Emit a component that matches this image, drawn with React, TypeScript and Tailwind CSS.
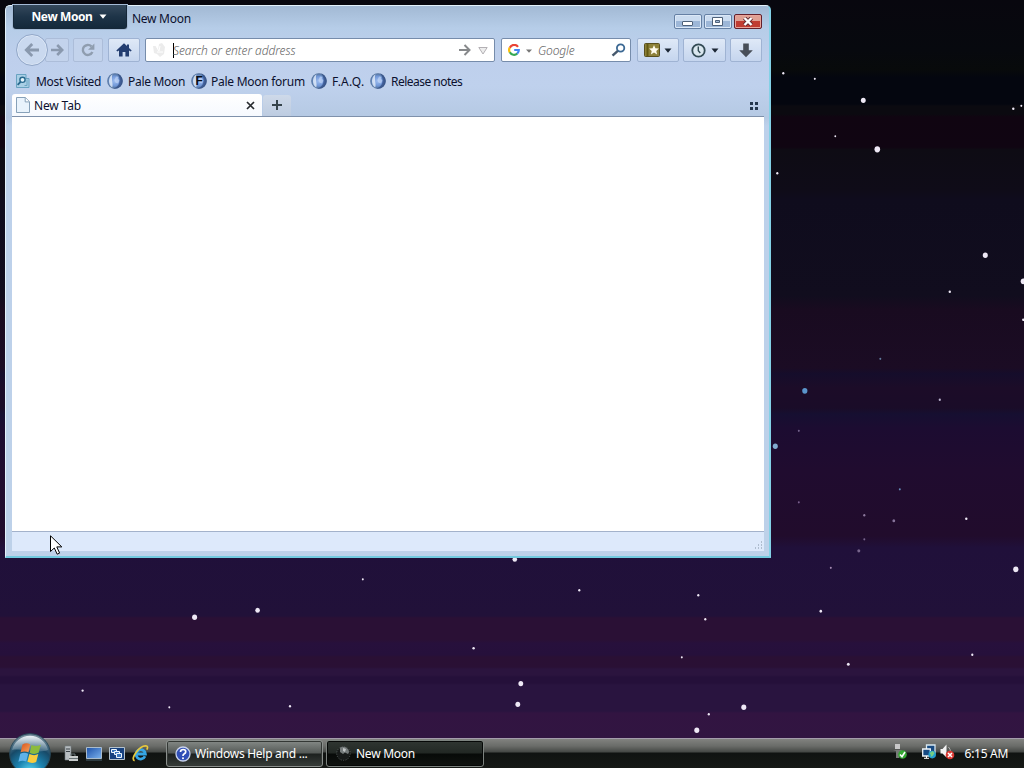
import React from 'react';

type Star = [number, number, number, string?];

const STARS: Star[] = [
  [783, 73, 1.1], [814.5, 78.5, 1], [863, 100, 2.4], [877, 149, 2.8], [835, 136, 0.9],
  [777, 173, 1.1], [1013, 108.5, 1.2], [1021, 105.5, 1], [985, 255, 2.5], [949.5, 291.5, 1.2],
  [1023, 281, 2.6], [1023, 319.5, 1.2], [880, 358.5, 1, '#627b9d'], [804.5, 390.5, 2.6, '#5b95cb'],
  [939.5, 399.5, 1.1, '#b9b1cc'], [798.5, 430.5, 1, '#74638c'], [775, 446, 2.5, '#82acd0'],
  [899.5, 489, 1, '#668bb7'], [798.5, 502, 1, '#79608d'], [864, 515, 1.1, '#8c799d'],
  [893.5, 520.5, 1.4, '#86749b'], [966, 518.5, 1.2], [864, 539, 1, '#78658d'],
  [858.5, 550.5, 1.5, '#77658c'], [830.5, 567.5, 1, '#a58bb2'], [1015.5, 569, 2.6],
  [820.5, 611, 1.3], [705, 619, 1.1], [698, 595, 1.1], [681.5, 657, 1],
  [848, 664, 1.4], [972, 654.5, 1.1], [743.5, 707, 2.5], [708.5, 714, 1.1], [696.5, 730, 2.5],
  [514.5, 559, 2.3], [579, 590, 1.1], [362.5, 579, 1], [194.3, 617, 2.5], [257.3, 610, 2.3],
  [473.3, 648, 1.2], [520.5, 683.3, 2.4], [517.5, 704, 2.4], [289.7, 706, 1.1], [169, 707, 1],
  [82.3, 690.3, 1.1],
];

const BOOKMARKS = [
  { label: 'Most Visited', kind: 'folder', className: 'w-[92px] gap-[5px] tracking-[-0.32px]' },
  { label: 'Pale Moon', kind: 'moon', className: 'w-[84px] gap-[5px] tracking-[-0.3px]' },
  { label: 'Pale Moon forum', kind: 'forum', className: 'w-[120px] gap-1 tracking-[-0.27px]' },
  { label: 'F.A.Q.', kind: 'moon', className: 'w-[59px] gap-[5px] tracking-[0.2px]' },
  { label: 'Release notes', kind: 'moon', className: 'w-[100px] gap-[5px] tracking-[-0.52px]' },
];

const Caret: React.FC = () => (
  <svg width="8" height="5" viewBox="0 0 8 5" fill="currentColor">
    <path d="M.5.5h7L4 4.7z" />
  </svg>
);

const BookmarkIcon: React.FC<{ kind: string }> = ({ kind }) => {
  if (kind === 'folder') {
    return (
      <svg width="16" height="16" viewBox="0 0 16 16" className="-mt-px shrink-0">
        <path d="M1.5 1.5h9.5v4h3v9H1.5z" fill="#a9cfe5" stroke="#69a3c1" />
        <circle cx="7.5" cy="6.8" r="2.6" fill="#e4f4fb" stroke="#28698e" strokeWidth="1.4" />
        <path d="M5.6 8.8l-3 3" stroke="#28698e" strokeWidth="1.8" />
        <path d="M9.5 12.5h2.5v-6" stroke="#6ba5c3" fill="none" />
      </svg>
    );
  }
  return (
    <svg width="16" height="16" viewBox="0 0 16 16" className="-mt-px shrink-0">
      <circle cx="8" cy="8" r="7.8" fill="url(#moonBall)" />
      <path d="M5.5 1.2C1 4 .8 11.5 5.2 14.6 6.6 11 3.8 6 5.5 1.2z" fill="#eef4fc" opacity=".75" />
      <path d="M9 3.4l2.4.4-.6 2 1.8 1.8-1.6 2.8-2.4-.6L7.4 7z" fill="#d9e8ff" opacity=".5" />
      <path d="M10.5.6A7.8 7.8 0 0 1 6 15.5C11.5 15 15 8 10.5.6z" fill="#233c78" opacity=".55" />
      {kind === 'forum' && (
        <text x="4.4" y="12.3" fontSize="12" fontWeight="900" fontFamily="Liberation Sans" fill="#050b14">F</text>
      )}
    </svg>
  );
};

const Defs: React.FC = () => (
  <svg width="0" height="0" className="absolute">
    <defs>
      <radialGradient id="moonBall" cx=".48" cy=".5" r=".55">
        <stop offset="0" stopColor="#9fbef0" />
        <stop offset=".55" stopColor="#7298d8" />
        <stop offset=".85" stopColor="#55759f" />
        <stop offset="1" stopColor="#344f86" />
      </radialGradient>
      <radialGradient id="orb" cx=".5" cy=".95" r=".9">
        <stop offset="0" stopColor="#5fdcf4" />
        <stop offset=".35" stopColor="#1c85b2" />
        <stop offset=".7" stopColor="#174a68" />
        <stop offset="1" stopColor="#6f8796" />
      </radialGradient>
      <linearGradient id="orbGloss" x1="0" y1="0" x2="0" y2="1">
        <stop offset="0" stopColor="#f4f8fb" stopOpacity=".95" />
        <stop offset="1" stopColor="#b6cbd6" stopOpacity=".25" />
      </linearGradient>
      <linearGradient id="flagRed" x1="0" y1="0" x2="1" y2="1">
        <stop offset="0" stopColor="#d8541c" />
        <stop offset="1" stopColor="#f7a25a" />
      </linearGradient>
      <linearGradient id="screen" x1="0" y1="0" x2="1" y2="1">
        <stop offset="0" stopColor="#1c50a8" />
        <stop offset="1" stopColor="#7cb3ee" />
      </linearGradient>
    </defs>
  </svg>
);

const Sky: React.FC = () => (
  <svg width="1024" height="768" className="absolute inset-0">
    {STARS.map(([x, y, r, color], i) => (
      <ellipse key={i} cx={x + 0.3} cy={y + 0.3} rx={r} ry={r * 1.1} fill={color ?? '#eee8f5'} />
    ))}
  </svg>
);

const TitleBar: React.FC = () => (
  <div className="flex h-[31px] items-start pl-[1px] pr-[2px]">
    <div className="flex h-6 w-[114px] items-center justify-center gap-[6px] rounded-b-[3px] border border-t-0 border-[#152738] bg-linear-to-b from-[#35495c] via-[#1e3448] to-[#14293b] pr-[2px] text-[12px] font-bold text-white shadow-[0_0_0_1px_#a4bad5]">
      <span className="tracking-[-0.4px]">New Moon</span>
      <Caret />
    </div>
    <span className="ml-[5px] mt-[4px] text-[12px] leading-5 tracking-[-0.27px]">New Moon</span>
    <div className="ml-auto mt-[9px] flex gap-[2px]">
      <div className="flex h-[15px] w-7 items-center justify-center rounded-[2px] border border-[#6580a4] bg-linear-to-b from-[#cbdcf0] from-50% to-[#9db7d8] to-50% shadow-[inset_0_0_0_1px_#dbe8f7]">
        <div className="ml-[-1px] mt-1 h-[5px] w-[11px] rounded-[1px] border border-[#4e6179] bg-white" />
      </div>
      <div className="flex h-[15px] w-7 items-center justify-center rounded-[2px] border border-[#6580a4] bg-linear-to-b from-[#cbdcf0] from-50% to-[#9db7d8] to-50% shadow-[inset_0_0_0_1px_#dbe8f7]">
        <svg width="11" height="9" viewBox="0 0 11 9" className="-ml-px">
          <path d="M.5.5h10v8H.5z" fill="#fff" stroke="#4e6179" />
          <path d="M3.5 3.5h4v2h-4z" fill="#a5bbd6" stroke="#4e6179" />
        </svg>
      </div>
      <div className="flex h-[15px] w-7 items-center justify-center rounded-[2px] border border-[#64202b] bg-linear-to-b from-[#e0a093] from-45% to-[#c03c32] to-50% shadow-[inset_0_0_0_1px_#e9a49a]">
        <svg width="12" height="9" viewBox="0 0 12 9">
          <path d="M2.5 1l7 7m0-7l-7 7" stroke="#642e36" strokeWidth="4.2" />
          <path d="M2.5 1l7 7m0-7l-7 7" stroke="#fff" strokeWidth="2.4" />
        </svg>
      </div>
    </div>
  </div>
);

const toolButton =
  'flex h-6 items-center justify-center rounded-[2px] border border-[#9fb3d3] bg-linear-to-b from-[#dfe9f7] to-[#c5d5ee] text-[#1c2735]';
const dimButton =
  'flex h-6 items-center justify-center rounded-[2px] border border-[#acbdd9] bg-[#c3d3ec]';

const NavBar: React.FC = () => (
  <div className="flex h-[31px] items-start pl-1 pr-[2px] pt-[2px]">
    <div className="z-10 -mt-1 flex size-8 shrink-0 items-center justify-center rounded-full border border-[#92a7c8] bg-[#cad9ef] shadow-[inset_0_0_0_1px_#dce7f6]">
      <svg width="16" height="14" viewBox="0 0 16 14" fill="none" stroke="#8a99ae" strokeWidth="2.8">
        <path d="M8.2 1L2.3 7l5.9 6M2.5 7H15" />
      </svg>
    </div>
    <div className={`${dimButton} -ml-[3px] w-6 shrink-0`}>
      <svg width="13" height="12" viewBox="0 0 13 12" fill="none" stroke="#8a99ae" strokeWidth="2.6">
        <path d="M6.2 1l5 5-5 5M11 6H0" />
      </svg>
    </div>
    <div className={`${dimButton} ml-1 w-[30px] shrink-0`}>
      <svg width="14" height="14" viewBox="0 0 14 14" fill="none">
        <path d="M10.4 3.4A5 5 0 1 0 11.4 9" stroke="#8f9daf" strokeWidth="2.4" />
        <path d="M13.4.5v6.3H7z" fill="#8f9daf" />
      </svg>
    </div>
    <div className={`${toolButton} ml-[5px] w-8 shrink-0`}>
      <svg width="16" height="14" viewBox="0 0 16 14" fill="#233d70">
        <path d="M8 .3L.3 7.6l1 1L3 7.5V13.5h3.6V9h2.8v4.5H13V7.5l1.7 1.1 1-1L13 5V1.5h-2V3z" />
      </svg>
    </div>
    <div className="ml-[5px] flex h-6 w-[350px] shrink-0 items-center rounded-[2px] border border-[#768cab] bg-white pl-[6px] pr-[6px]">
      <svg width="14" height="14" viewBox="0 0 14 14" fill="#ececec">
        <path d="M1 3h3l2 4 1-6 3-1 3 4-1 7-4 3-3-3-3-1z" />
        <path d="M4 3l3 5 1-5m-3 6h6" stroke="#fff" fill="none" />
      </svg>
      <div className="ml-[7px] h-[15px] w-px bg-black" />
      <span className="-ml-px mt-[2px] text-[12px] font-light italic tracking-[-0.07px] text-[#666]">Search or enter address</span>
      <svg width="12" height="12" viewBox="0 0 12 12" className="ml-auto" fill="none" stroke="#87898b" strokeWidth="2">
        <path d="M5.5 1l5 5-5 5M10.5 6H0" />
      </svg>
      <svg width="10" height="9" viewBox="0 0 10 9" className="ml-[7px]" fill="#ededed" stroke="#b3b0b4">
        <path d="M.8 1.5h8.4L5 8z" />
      </svg>
    </div>
    <div className="ml-[6px] flex h-6 w-[130px] shrink-0 items-center rounded-[2px] border border-[#768cab] bg-white pl-[6px] pr-[4px]">
      <svg width="12" height="12" viewBox="0 0 12 12" fill="none" strokeWidth="2.2">
        <path d="M10 2.8A4.8 4.8 0 0 0 1.8 3.7" stroke="#ea4335" />
        <path d="M1.8 3.6a4.8 4.8 0 0 0 0 4.8" stroke="#fbbc05" />
        <path d="M1.8 8.3a4.8 4.8 0 0 0 7.5 1.2" stroke="#34a853" />
        <path d="M9.2 9.6A4.8 4.8 0 0 0 10.8 6H6.2" stroke="#4285f4" />
      </svg>
      <svg width="6" height="4" viewBox="0 0 6 4" className="ml-[6px] mt-px" fill="#777">
        <path d="M0 .5h6L3 3.7z" />
      </svg>
      <span className="ml-[6px] mt-[2px] text-[12px] font-light italic tracking-[-0.15px] text-[#666]">Google</span>
      <svg width="15" height="14" viewBox="0 0 15 14" className="ml-auto" fill="none">
        <circle cx="9.6" cy="5" r="3.7" stroke="#3b6893" strokeWidth="1.8" />
        <path d="M6.8 7.8L1.5 12.7" stroke="#46586c" strokeWidth="2.4" />
      </svg>
    </div>
    <div className={`${toolButton} ml-[6px] w-[42px] shrink-0 gap-1`}>
      <svg width="16" height="14" viewBox="0 0 16 14">
        <rect x=".5" y=".5" width="15" height="13" rx="1" fill="#8d8139" stroke="#595020" />
        <path d="M3.5 1v12" stroke="#635913" strokeWidth="2" />
        <path d="M10 2l1.4 3.2 3.5.4-2.6 2.3.8 3.5-3.1-1.8-3.1 1.8.8-3.5-2.6-2.3 3.5-.4z" fill="#fffbed" />
      </svg>
      <Caret />
    </div>
    <div className={`${toolButton} ml-1 w-[43px] shrink-0 gap-[5px]`}>
      <svg width="15" height="15" viewBox="0 0 15 15" fill="none" stroke="#334b55">
        <circle cx="7.5" cy="7.5" r="6.2" strokeWidth="1.8" fill="#dae7ef" />
        <path d="M7.3 3.5v4.3l2 2.2" strokeWidth="1.4" />
      </svg>
      <Caret />
    </div>
    <div className={`${toolButton} ml-1 w-8 shrink-0`}>
      <svg width="14" height="15" viewBox="0 0 14 15" fill="#474e58">
        <path d="M4.2.5h5.6v6.7h4L7 14.2.2 7.2h4z" />
      </svg>
    </div>
  </div>
);

const BookmarksBar: React.FC = () => (
  <div className="flex h-[27px] items-center pl-[3px] pt-[2px]">
    {BOOKMARKS.map(({ label, kind, className }) => (
      <div key={label} className={`flex shrink-0 items-center whitespace-nowrap text-[12px] ${className}`}>
        <BookmarkIcon kind={kind} />
        <span>{label}</span>
      </div>
    ))}
  </div>
);

const TabBar: React.FC = () => (
  <div className="flex h-[23px] items-end border-b border-[#7f91ab]">
    <div className="flex h-[22px] w-[250px] items-center rounded-t-[3px] bg-linear-to-b from-white to-[#f6f9fe] pl-1 pr-[7px]">
      <svg width="14" height="16" viewBox="0 0 14 16">
        <path d="M.5.5h8.8l4.2 4.2v10.8H.5z" fill="#e9f3fc" stroke="#87a1b9" />
        <path d="M9.2.7v4.2h4.2" fill="#fff" stroke="#87a1b9" />
      </svg>
      <span className="ml-1 mt-[2px] text-[12px] tracking-[-0.15px]">New Tab</span>
      <svg width="9" height="9" viewBox="0 0 9 9" className="ml-auto" stroke="#272a2e" strokeWidth="1.7">
        <path d="M1 1l7 7M8 1L1 8" />
      </svg>
    </div>
    <div className="ml-px flex h-[21px] w-7 items-center justify-center rounded-t-[3px] bg-linear-to-b from-[#ced9e9] to-[#bdcce1]">
      <svg width="10" height="10" viewBox="0 0 10 10" className="-mt-px" stroke="#35434b" strokeWidth="2">
        <path d="M5 0v10M0 5h10" />
      </svg>
    </div>
    <div className="mb-[6px] ml-auto mr-[6px] grid grid-cols-2 gap-[2px]">
      {[0, 1, 2, 3].map((n) => (
        <div key={n} className="size-[3px] bg-[#24374e]" />
      ))}
    </div>
  </div>
);

const BrowserWindow: React.FC = () => (
  <div className="absolute left-[5px] top-[5px] flex h-[553px] w-[766px] flex-col rounded-t-[5px] border border-b-2 border-r-2 border-[#e3f2fb] border-b-[#72cadf] border-r-[#84d1e6] bg-[linear-gradient(180deg,#a2b9d4_0,#b6cde8_22px,#becfec_50px,#bfd1ed_80px,#b5c9e3_112px,#bdd1eb_120px,#bdd1e9_100%)] pb-[5px] pl-[6px] pr-[5px] text-[#0b102e]">
    <div className="-mt-px">
      <TitleBar />
      <NavBar />
      <BookmarksBar />
      <TabBar />
    </div>
    <div className="flex-1 bg-white" />
    <div className="flex h-5 items-end justify-end border-t border-[#a3b2cb] bg-[#dde9fb] p-px">
      <svg width="9" height="9" viewBox="0 0 9 9" fill="#afbdcf">
        <path d="M7 0h1v2H7zM7 3h1v2H7zM7 6h1v2H7zM4 3h1v2H4zM4 6h1v2H4zM1 6h1v2H1z" />
      </svg>
    </div>
  </div>
);

const StartOrb: React.FC = () => (
  <svg width="42" height="36" viewBox="0 0 42 36" className="-mt-[6px] ml-[9px] shrink-0">
    <circle cx="21" cy="21" r="20.3" fill="url(#orb)" stroke="#294a5b" />
    <path d="M3 17A18.5 18.5 0 0 1 39 17C29 21 13 15 3 17z" fill="url(#orbGloss)" />
    <path d="M13.5 11.5q3.8-2.2 7.8-.2l-1.8 8q-3.6-1.8-7.9 0z" fill="url(#flagRed)" />
    <path d="M22.5 12q4.5 2.3 9.3-.2l-2.2 8q-4.4 2.2-8.9-.1z" fill="#8cbb3d" />
    <path d="M11.3 20.8q4-2 7.9 0l-2 7.8q-3.6-1.8-7.8.1z" fill="#5fb2e8" />
    <path d="M20.4 21q4.6 2.2 8.9.1l-2.1 7.9q-4.4 2-8.8-.2z" fill="#f9cc3e" />
  </svg>
);

const QuickLaunch: React.FC = () => (
  <div className="ml-3 flex items-center gap-[7px]">
    <svg width="16" height="17" viewBox="0 0 16 17">
      <path d="M2 1h6v14H2z" fill="#b7bdc0" stroke="#747d80" strokeWidth=".6" />
      <path d="M3 4h4M3 6.5h4" stroke="#394146" />
      <path d="M6 11h9v5H6z" fill="#c8cccc" />
      <path d="M8 11V9h4v2M6 13.5h9" fill="none" stroke="#697476" />
    </svg>
    <svg width="16" height="14" viewBox="0 0 16 14">
      <path d="M.5.5h15v11H.5z" fill="url(#screen)" stroke="#aabccc" />
      <path d="M0 13h16" stroke="#48616f" />
    </svg>
    <svg width="16" height="14" viewBox="0 0 16 14">
      <path d="M.5.5h15v12H.5z" fill="#17417f" stroke="#b3c1cc" />
      <path d="M2.5 2.5h5v3h-5z" fill="#3c76bd" stroke="#edf6fe" />
      <path d="M5.5 4.5h5v3h-5z" fill="#3c76bd" stroke="#edf6fe" />
      <path d="M7.5 6.5h5v4h-5z" fill="#3c76bd" stroke="#edf6fe" />
    </svg>
    <svg width="17" height="17" viewBox="0 0 17 17" fill="none">
      <path d="M13 11.3A4.7 4.7 0 1 1 13.4 9H5" stroke="#36a6e5" strokeWidth="2.8" />
      <path d="M2.6 15.8C-2.5 14 8-.5 14.6 1c1.4.5 1 2.2.2 3.6" stroke="#e8c93c" strokeWidth="1.7" />
    </svg>
  </div>
);

const Tray: React.FC = () => (
  <div className="ml-auto flex items-center pr-4">
    <svg width="15" height="16" viewBox="0 0 15 16" className="-mt-1">
      <path d="M2 0h5v5H2z" fill="#c8c8c8" />
      <path d="M0 6h9l-1 5H6v3H3V7z" fill="#777a78" />
      <circle cx="9.5" cy="10.5" r="4.3" fill="#35a833" />
      <path d="M7 10.5l2 2.2L12 8" stroke="#fff" strokeWidth="1.6" fill="none" />
    </svg>
    <svg width="16" height="16" viewBox="0 0 16 16" className="-mt-1 ml-[14px]">
      <path d="M4.5 1h8.5v8H4.5z" fill="#174a82" stroke="#d8e7f0" strokeWidth="1.3" />
      <path d="M.7 5h7.6v7H.7z" fill="#174a82" stroke="#f0f5f8" strokeWidth="1.3" />
      <path d="M4.5 12v2M2 14.3h5" stroke="#fff" />
      <circle cx="10.2" cy="10.6" r="3.8" fill="#239dcf" />
      <path d="M7.6 9q2 2 1 4l2-1 2-3-2-2z" fill="#75cf83" />
    </svg>
    <svg width="16" height="16" viewBox="0 0 16 16" className="-mt-1 ml-[2px]">
      <path d="M.5 5h2l4-4.5v13l-4-4h-2z" fill="#f3f3f3" />
      <path d="M8.5 3q2 2 2 5" stroke="#b1b1b1" fill="none" />
      <circle cx="10" cy="11" r="4.3" fill="#dc3832" />
      <path d="M8 9l4 4m0-4l-4 4" stroke="#fff" strokeWidth="1.5" />
    </svg>
    <span className="ml-[9px] text-[12px] tracking-[-0.3px] text-white">6:15 AM</span>
  </div>
);

const Taskbar: React.FC = () => (
  <div className="flex h-[30px] items-center border-t border-[#a49cab] bg-[linear-gradient(180deg,#81827f_0,#6a6c69_7px,#454845_13px,#101311_14px,#161916_100%)]">
    <StartOrb />
    <QuickLaunch />
    <div className="ml-[17px] flex h-[27px] w-[157px] items-center whitespace-nowrap rounded-[3px] border border-[#8b908d] bg-[linear-gradient(180deg,#858a87_0,#545956_12px,#1c201e_13px,#373d39_100%)] pl-2 shadow-[inset_0_0_0_1px_#343835]">
      <svg width="16" height="16" viewBox="0 0 16 16">
        <circle cx="8" cy="8" r="7" fill="#304fb7" stroke="#c8d3ed" strokeWidth="1.3" />
        <path d="M5.5 6q0-2.5 2.7-2.5T10.7 6Q10.7 7 9 8 8 8.5 8 10" fill="none" stroke="#fff" strokeWidth="1.7" />
        <circle cx="8" cy="12.2" r="1" fill="#fff" />
      </svg>
      <span className="ml-1 text-[12px] tracking-[-0.27px] text-white">Windows Help and ...</span>
    </div>
    <div className="ml-[3px] flex h-[27px] w-[158px] items-center rounded-[3px] border border-[#7d837f] bg-[linear-gradient(180deg,#303632_0,#222824_12px,#070a08_13px,#101310_100%)] pl-[9px] shadow-[inset_0_0_0_1px_#060807]">
      <svg width="15" height="15" viewBox="0 0 15 15">
        <circle cx="7.5" cy="7.5" r="6.8" fill="#171a19" stroke="#5a605f" strokeDasharray="1 1.5" />
        <path d="M4 1.5Q9-.5 12 3q2 3 0 5L9 6.5 7 8 4 6z" fill="#757b7b" />
        <path d="M7 2l3 1-1 3-2-1z" fill="#c0c4c4" />
      </svg>
      <span className="ml-[5px] mt-px text-[12px] tracking-[-0.25px] text-white">New Moon</span>
    </div>
    <Tray />
  </div>
);

const App: React.FC = () => (
  <div className="relative flex h-[768px] w-[1024px] flex-col justify-end overflow-hidden bg-[linear-gradient(180deg,#08070e_0,#07090e_50px,#080a0b_70px,#04060f_78px,#04060f_104px,#0b0a10_106px,#0b0a10_114px,#100511_117px,#100512_147px,#0e0c14_150px,#0f0c18_190px,#0f0c1d_200px,#110d1e_295px,#190b20_310px,#1b0c24_368px,#150d2b_374px,#1c0c28_388px,#1a0c28_408px,#160f31_414px,#1c0c31_428px,#200c2f_470px,#210c2c_536px,#20103a_548px,#211139_616px,#2a1035_618px,#2a1035_640px,#27103c_643px,#26103b_655px,#2a1034_657px,#2a1035_667px,#2b143e_669px,#2b143e_675px,#25103a_677px,#25103a_683px,#29143f_685px,#29143f_711px,#321441_713px,#311541_738px)] font-['Noto_Sans','Open_Sans',sans-serif]">
    <Defs />
    <Sky />
    <BrowserWindow />
    <div className="relative">
      <Taskbar />
    </div>
    <svg width="12" height="20" viewBox="0 0 12 20" className="absolute left-[50px] top-[535px]">
      <path d="M.5.8v15.7l3.8-3.5 2.9 6.2 2.4-1.1-2.8-6.2h5z" fill="#fff" stroke="#000" />
    </svg>
  </div>
);

export default App;
